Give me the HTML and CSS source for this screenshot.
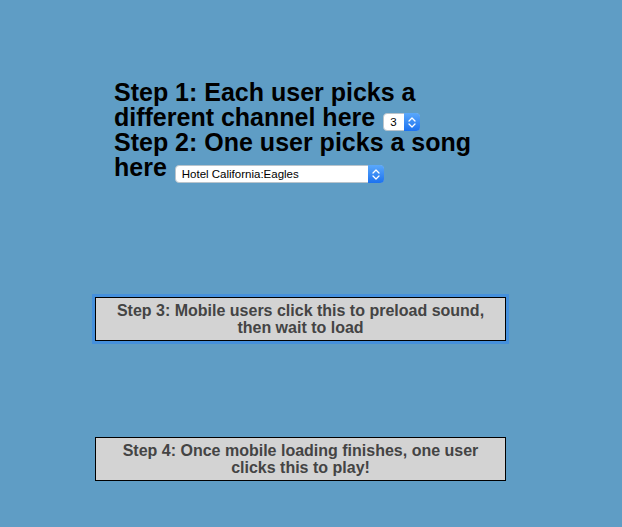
FILE: index.html
```html
<!DOCTYPE html>
<html>
<head>
<meta charset="utf-8">
<link rel="stylesheet" href="styles.css">
</head>
<body>
<div class="page">
  <div class="steps">
    Step 1: Each user picks a different channel here
    <span class="sel sel-small">
      <select class="sel-input"><option>3</option></select>
      <span class="sel-arrow"><svg width="8" height="11" viewBox="0 0 8 11"><path d="M1 4 L4 1 L7 4 M1 7 L4 10 L7 7" fill="none" stroke="#fff" stroke-width="1.3" stroke-linecap="round" stroke-linejoin="round"/></svg></span>
    </span><br>
    Step 2: One user picks a song here
    <span class="sel sel-wide">
      <select class="sel-input"><option>Hotel California:Eagles</option></select>
      <span class="sel-arrow"><svg width="8" height="11" viewBox="0 0 8 11"><path d="M1 4 L4 1 L7 4 M1 7 L4 10 L7 7" fill="none" stroke="#fff" stroke-width="1.3" stroke-linecap="round" stroke-linejoin="round"/></svg></span>
    </span>
  </div>
  <button class="btn btn-focus">Step 3: Mobile users click this to preload sound, then wait to load</button>
  <button class="btn btn-last">Step 4: Once mobile loading finishes, one user clicks this to play!</button>
</div>
</body>
</html>
```
FILE: styles.css
```css
html, body {
  margin: 0;
  padding: 0;
  background: #5f9dc5;
  width: 622px;
  height: 527px;
  overflow: hidden;
}
.page {
  display: flex;
  flex-direction: column;
  width: 411px;
  margin-left: 95px;
  padding-top: 80px;
}
.steps {
  padding-left: 19px;
  font-family: "Liberation Sans", Arial, sans-serif;
  font-weight: bold;
  font-size: 25px;
  line-height: 25px;
  color: #000;
}
.sel {
  position: relative;
  display: inline-block;
  height: 18px;
  line-height: 0;
  vertical-align: 1px;
}
.sel-small { width: 37px; margin-left: 1px; transform: translateY(1px); }
.sel-wide { width: 209px; margin-left: 1px; transform: translateY(3px); }
.sel-input {
  -webkit-appearance: none;
  appearance: none;
  width: 100%;
  height: 18px;
  margin: 0;
  padding: 0 0 0 6px;
  border: 1px solid #b9c4cc;
  border-radius: 4px;
  background: #fff;
  font-family: "Liberation Sans", Arial, sans-serif;
  font-weight: normal;
  font-size: 11.5px;
  line-height: 16px;
  color: #000;
  box-sizing: border-box;
}
.sel-arrow {
  position: absolute;
  top: 0;
  right: 0;
  width: 16px;
  height: 18px;
  border-radius: 0 4px 4px 0;
  background: linear-gradient(#5aa8fb, #1c72f0);
  display: flex;
  align-items: center;
  justify-content: center;
}
.btn {
  width: 411px;
  height: 44px;
  margin: 0;
  padding: 0 10px;
  background: #d3d3d3;
  border: 1px solid #000;
  font-family: "Liberation Sans", Arial, sans-serif;
  font-weight: bold;
  font-size: 16px;
  line-height: 17px;
  color: #444;
  box-sizing: border-box;
}
.btn-focus {
  margin-top: 117px;
  outline: 3px solid #4590dc;
  outline-offset: 0;
}
.btn-last {
  margin-top: 96px;
}
```
